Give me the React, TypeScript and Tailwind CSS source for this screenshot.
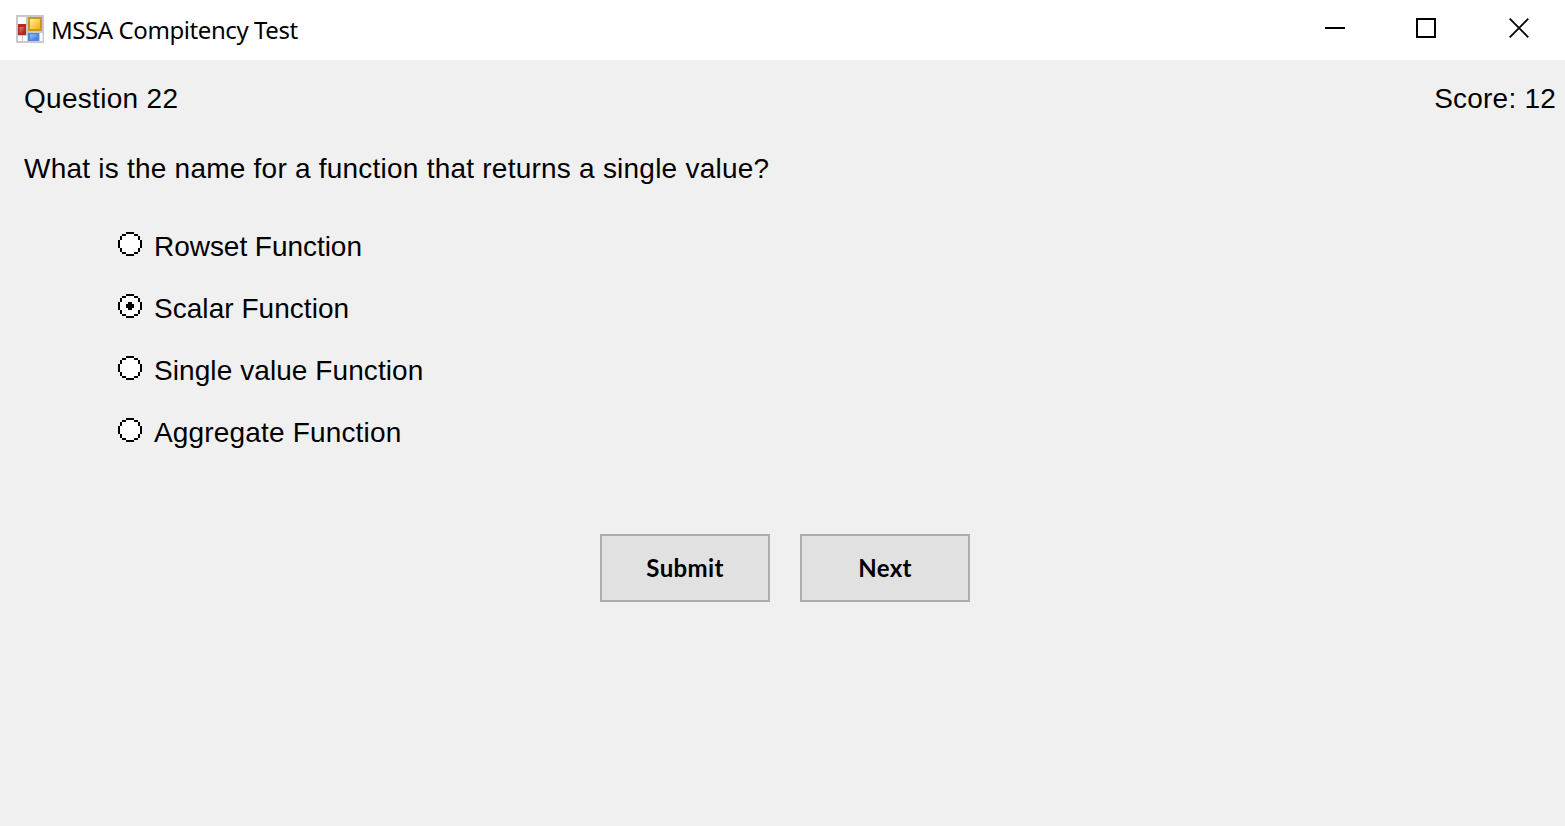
import { useState } from "react";

const OPTIONS = [
  { label: "Rowset Function", tracking: "tracking-[-0.04px]" },
  { label: "Scalar Function", tracking: "tracking-[0.04px]" },
  { label: "Single value Function", tracking: "tracking-[0.08px]" },
  { label: "Aggregate Function", tracking: "tracking-[0.17px]" },
];

function FormIcon() {
  return (
    <svg className="size-7 shrink-0" viewBox="0 0 28 28">
      <defs>
        <linearGradient id="gold" x1="0" y1="0" x2="1" y2="1">
          <stop offset="0" stopColor="#fff0a0" />
          <stop offset="1" stopColor="#f0ae10" />
        </linearGradient>
        <linearGradient id="red" x1="0" y1="0" x2="1" y2="1">
          <stop offset="0" stopColor="#e08070" />
          <stop offset="1" stopColor="#a81c14" />
        </linearGradient>
        <linearGradient id="blue" x1="0" y1="0" x2="1" y2="1">
          <stop offset="0" stopColor="#9cc4fa" />
          <stop offset="1" stopColor="#3e78d8" />
        </linearGradient>
      </defs>
      <rect width="28" height="28" fill="#c9c9cb" />
      <rect x="2" y="2" width="8" height="7" fill="#fff" />
      <rect x="2" y="21" width="4" height="5" fill="#fff" />
      <rect x="7" y="21" width="4" height="5" fill="#fff" />
      <rect x="24" y="18" width="2.5" height="8" fill="#fff" />
      <rect x="2" y="9" width="8" height="11" fill="#b22a20" />
      <rect x="3.5" y="12" width="5" height="6" fill="url(#red)" />
      <rect x="12" y="2" width="14" height="14" fill="#c99822" />
      <rect x="14" y="4" width="10" height="10" fill="url(#gold)" />
      <rect x="12" y="18" width="11" height="8" fill="#5288dc" />
      <rect x="14" y="19.5" width="7" height="5" fill="url(#blue)" />
    </svg>
  );
}

function RadioMark({ checked }: { checked: boolean }) {
  return (
    <svg className="mt-px size-6 shrink-0" viewBox="0 0 12 12" shapeRendering="crispEdges">
      <path fill="#fff" d="M4 1h4v1h2v2h1v4h-1v2h-2v1h-4v-1h-2v-2h-1v-4h1v-2h2z" />
      <path
        fill="#000"
        d="M4 0h4v1h-4zM2 1h2v1h-2zM8 1h2v1h-2zM1 2h1v2h-1zM10 2h1v2h-1zM0 4h1v4h-1zM11 4h1v4h-1zM1 8h1v2h-1zM10 8h1v2h-1zM2 10h2v1h-2zM8 10h2v1h-2zM4 11h4v1h-4z"
      />
      {checked && <path fill="#000" d="M5 4h2v1h1v2h-1v1h-2v-1h-1v-2h1z" />}
    </svg>
  );
}

export default function App() {
  const [selected, setSelected] = useState(1);
  return (
    <div className="flex h-[826px] w-full flex-col overflow-hidden bg-[#f0f0f0] font-['Liberation_Sans',sans-serif] text-[28px] leading-8 text-black">
      <header className="flex h-[60px] shrink-0 items-start justify-between bg-white">
        <div className="flex items-start pt-[15px] pl-4">
          <FormIcon />
          <h1 className="-mt-px ml-[7px] font-['Noto_Sans',sans-serif] text-2xl leading-8 tracking-[-0.42px]">
            MSSA Compitency Test
          </h1>
        </div>
        <div className="flex h-14 items-center">
          <button aria-label="Minimize" className="flex w-[92px] justify-center">
            <svg className="size-5" viewBox="0 0 20 20"><path d="M0 10h20" stroke="#000" strokeWidth="2" /></svg>
          </button>
          <button aria-label="Maximize" className="flex w-[92px] justify-center pr-0.5">
            <svg className="size-5" viewBox="0 0 20 20"><path d="M1 1h18v18H1z" fill="none" stroke="#000" strokeWidth="2" /></svg>
          </button>
          <button aria-label="Close" className="flex w-[92px] justify-center">
            <svg className="size-5" viewBox="0 0 20 20"><path d="M.7.7 19.3 19.3M19.3.7.7 19.3" stroke="#000" strokeWidth="1.8" /></svg>
          </button>
        </div>
      </header>

      <main className="flex flex-col">
        <div className="flex justify-between pt-[23px] pr-[9px] pl-6">
          <span className="tracking-[0.3px]">Question 22</span>
          <span className="tracking-[0.22px]">Score: 12</span>
        </div>
        <p className="mt-[38px] pl-6 tracking-[0.23px]">What is the name for a function that returns a single value?</p>
        <div className="mt-[46px] flex flex-col gap-[30px] pl-[118px]">
          {OPTIONS.map((option, i) => (
            <label key={option.label} className="flex h-8 items-start gap-3">
              <input type="radio" name="answer" className="sr-only" checked={selected === i} onChange={() => setSelected(i)} />
              <RadioMark checked={selected === i} />
              <span className={option.tracking}>{option.label}</span>
            </label>
          ))}
        </div>
        <div className="mt-[85px] flex gap-[30px] pl-[600px] font-['Lato',sans-serif] text-2xl font-bold tracking-[0.35px]">
          <button className="h-[68px] w-[170px] border-2 border-[#adadad] bg-[#e1e1e1]">Submit</button>
          <button className="h-[68px] w-[170px] border-2 border-[#adadad] bg-[#e1e1e1]">Next</button>
        </div>
      </main>
    </div>
  );
}
